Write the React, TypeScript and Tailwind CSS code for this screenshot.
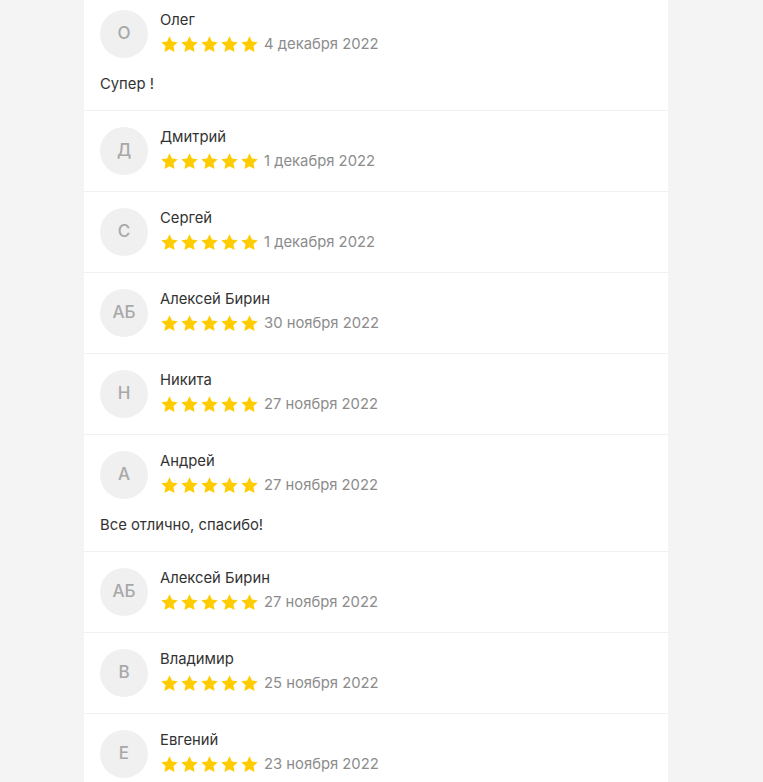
import React from 'react';

type Review = { name: string; initials: string; date: string; text?: string };

const reviews: Review[] = [
  { name: 'Олег', initials: 'О', date: '4 декабря 2022', text: 'Супер !' },
  { name: 'Дмитрий', initials: 'Д', date: '1 декабря 2022' },
  { name: 'Сергей', initials: 'С', date: '1 декабря 2022' },
  { name: 'Алексей Бирин', initials: 'АБ', date: '30 ноября 2022' },
  { name: 'Никита', initials: 'Н', date: '27 ноября 2022' },
  { name: 'Андрей', initials: 'А', date: '27 ноября 2022', text: 'Все отлично, спасибо!' },
  { name: 'Алексей Бирин', initials: 'АБ', date: '27 ноября 2022' },
  { name: 'Владимир', initials: 'В', date: '25 ноября 2022' },
  { name: 'Евгений', initials: 'Е', date: '23 ноября 2022' },
];

const Star = () => (
  <svg viewBox="0 0 24 24" className="w-[19px] h-[19px]" fill="#ffcc00">
    <path d="M12 1.6l3.1 6.7 7.3.9-5.4 5 1.4 7.2L12 17.9l-6.4 3.5 1.4-7.2-5.4-5 7.3-.9z" />
  </svg>
);

export default function App() {
  return (
    <div className="min-h-screen bg-[#f4f4f4] overflow-hidden" style={{ fontFamily: 'Inter, "Noto Sans", sans-serif' }}>
      <div className="mx-[84px] w-[584px] bg-white -mt-[6px]">
        {reviews.map((r, i) => (
          <div key={i} className="px-4 py-4 border-b border-[#f0f0f0]">
            <div className="flex items-start gap-3">
              <div className="w-12 h-12 rounded-full bg-[#f0f0f0] flex items-center justify-center text-[17px] font-medium text-[#a8a8a8] shrink-0">
                {r.initials}
              </div>
              <div className="flex flex-col gap-1">
                <div className="text-[14.8px] leading-5 text-[#333]">{r.name}</div>
                <div className="flex items-center h-5">
                  <div className="flex gap-[1px]">
                    {[0, 1, 2, 3, 4].map(s => (
                      <Star key={s} />
                    ))}
                  </div>
                  <span className="ml-[5px] text-[14.8px] text-[#8c8c8c]">{r.date}</span>
                </div>
              </div>
            </div>
            {r.text && <div className="mt-4 text-[14.8px] leading-5 text-[#333]">{r.text}</div>}
          </div>
        ))}
      </div>
    </div>
  );
}
